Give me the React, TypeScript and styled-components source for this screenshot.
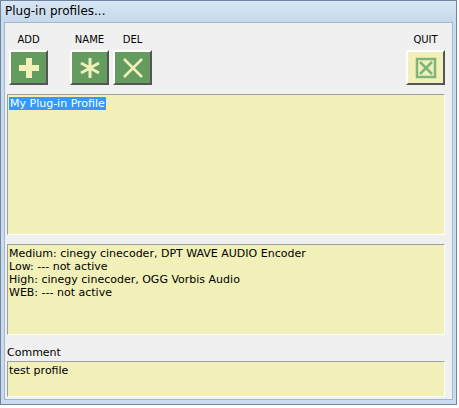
import styled, { createGlobalStyle } from "styled-components";

const Global = createGlobalStyle`
  body { margin: 0; background: #fff; font-family: Tahoma, "DejaVu Sans", sans-serif; }
`;

const Win = styled.div`
  width: 457px;
  height: 405px;
  background: #c9dbee;
  border: 1px solid #6f86a0;
  box-sizing: border-box;
  display: flex;
  flex-direction: column;
`;

const Title = styled.div`
  height: 21px;
  padding-left: 4px;
  font-size: 12px;
  line-height: 20px;
  color: #000;
  background: linear-gradient(#d9e6f4, #c5d8ec);
`;

const Body = styled.div`
  flex: 1;
  margin: 0 3px 4px 3px;
  background: #f0f0f0;
  border: 1px solid #a5b6c8;
  padding: 0 7px 0 2px;
  display: flex;
  flex-direction: column;
  font-size: 11px;
`;

const Toolbar = styled.div`
  display: flex;
  align-items: flex-end;
  height: 71px;
  padding-bottom: 9px;
  box-sizing: border-box;
`;

const Tool = styled.div<{ $ml?: number }>`
  display: flex;
  flex-direction: column;
  align-items: center;
  margin-left: ${(p) => p.$ml ?? 0}px;
  gap: 5px;
`;

const Label = styled.span`
  font-size: 10px;
  color: #000;
`;

const Btn = styled.div<{ $bg: string }>`
  width: 39px;
  height: 35px;
  box-sizing: border-box;
  background: ${(p) => p.$bg};
  border: 2px solid;
  border-color: #fff #555 #555 #fff;
  display: flex;
  align-items: center;
  justify-content: center;
`;

const Box = styled.div<{ $h: number }>`
  height: ${(p) => p.$h}px;
  background: #f1f0b9;
  border-top: 1px solid #a0a0a0;
  border-left: 1px solid #a0a0a0;
  border-right: 1px solid #fff;
  border-bottom: 1px solid #fff;
  box-sizing: border-box;
  padding: 2px 1px;
  line-height: 13px;
  color: #000;
`;

const Sel = styled.span`
  background: #3399ff;
  color: #fff;
  padding: 0 1px;
`;

const Caption = styled.div`
  margin: 11px 0 2px 0;
  line-height: 13px;
`;

export default function App() {
  return (
    <>
      <Global />
      <Win>
        <Title>Plug-in profiles...</Title>
        <Body>
          <Toolbar>
            <Tool $ml={2}>
              <Label>ADD</Label>
              <Btn $bg="#639c5e">
                <svg width="24" height="24"><path d="M9 2h6v7h7v6h-7v7H9v-7H2V9h7z" fill="#f1f0b9" /></svg>
              </Btn>
            </Tool>
            <Tool $ml={22}>
              <Label>NAME</Label>
              <Btn $bg="#639c5e">
                <svg width="24" height="24" stroke="#f1f0b9" strokeWidth="3">
                  <path d="M12 2v20M3 7l18 10M3 17l18-10" />
                </svg>
              </Btn>
            </Tool>
            <Tool $ml={4}>
              <Label>DEL</Label>
              <Btn $bg="#639c5e">
                <svg width="24" height="24" stroke="#f1f0b9" strokeWidth="2.5">
                  <path d="M3 3l18 18M21 3L3 21" />
                </svg>
              </Btn>
            </Tool>
            <Tool style={{ marginLeft: "auto" }}>
              <Label>QUIT</Label>
              <Btn $bg="#f1f0b9">
                <svg width="22" height="22" fill="none" stroke="#7fb47a" strokeWidth="2.5">
                  <rect x="2" y="2" width="18" height="18" />
                  <path d="M5 5l12 12M17 5L5 17" />
                </svg>
              </Btn>
            </Tool>
          </Toolbar>
          <Box $h={141}><Sel>My Plug-in Profile</Sel></Box>
          <Box $h={91} style={{ marginTop: 9 }}>
            Medium: cinegy cinecoder, DPT WAVE AUDIO Encoder<br />
            Low: --- not active<br />
            High: cinegy cinecoder, OGG Vorbis Audio<br />
            WEB: --- not active
          </Box>
          <Caption>Comment</Caption>
          <Box $h={36}>test profile</Box>
        </Body>
      </Win>
    </>
  );
}
